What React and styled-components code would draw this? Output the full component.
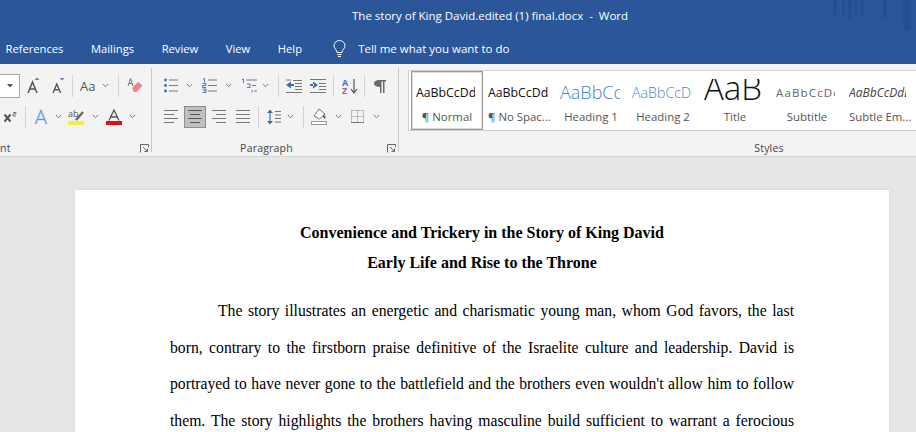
import React from "react";
import styled, { createGlobalStyle } from "styled-components";

const Global = createGlobalStyle`
  html, body { margin: 0; padding: 0; height: 100%; overflow: hidden; background: #e6e6e6; }
`;

const Window = styled.div`
  width: 916px;
  height: 432px;
  overflow: hidden;
  display: flex;
  flex-direction: column;
  font-family: "Open Sans", "Noto Sans", sans-serif;
`;

const TitleBar = styled.div`
  position: relative;
  height: 32px;
  flex: none;
  background: #2b579a;
  color: #fff;
  font-size: 11.5px;
  line-height: 31px;
  padding-left: 352px;
  white-space: pre;
`;

const TitleArt = styled.svg`
  position: absolute;
  right: 0;
  top: 0;
`;

const TabBar = styled.div`
  height: 32px;
  flex: none;
  background: #2b579a;
  color: #fff;
  font-size: 11.2px;
  display: flex;
  align-items: center;
  gap: 27.6px;
  padding-left: 5.5px;
`;

const TellMe = styled.div`
  display: flex;
  align-items: center;
  gap: 12px;
  margin-left: 3.5px;
  font-size: 11.5px;
`;

const Ribbon = styled.div`
  height: 92px;
  flex: none;
  background: #f3f3f3;
  border-bottom: 1px solid #d4d4d4;
  display: flex;
`;

const Group = styled.div`
  width: ${(p) => p.$w}px;
  flex: none;
  box-sizing: border-box;
  border-right: ${(p) => (p.$last ? "none" : "1px solid #c8c8c8")};
  height: 84px;
  margin-top: 4px;
  display: flex;
  flex-direction: column;
`;

const ToolRow = styled.div`
  display: flex;
  align-items: center;
  height: ${(p) => p.$h}px;
  margin-top: 5px;
`;

const Ico = styled.svg`
  flex: none;
  margin-left: ${(p) => p.$ml || 0}px;
  display: block;
`;

const Sep = styled.div`
  flex: none;
  width: 1px;
  height: 22px;
  background: #d2d2d2;
  margin-left: ${(p) => p.$ml}px;
`;

const FontBox = styled.div`
  width: 19px;
  height: 22px;
  flex: none;
  background: #fff;
  border: 1px solid #a9a9a9;
  border-left: none;
  display: flex;
  align-items: center;
  justify-content: center;
`;

const Active = styled.div`
  width: 22px;
  height: 22px;
  flex: none;
  margin-left: ${(p) => p.$ml}px;
  background: #c0c0c0;
  border: 1px solid #8e8e8e;
  box-sizing: border-box;
  display: flex;
  align-items: center;
  justify-content: center;
`;

const Footer = styled.div`
  display: flex;
  align-items: center;
  height: 16px;
  margin-top: auto;
  margin-bottom: -4px;
  font-size: 10.5px;
  color: #444;
  letter-spacing: 0.2px;
  padding-right: 2px;
`;

const FooterLabel = styled.span`
  flex: 1;
  text-align: ${(p) => p.$align || "center"};
  padding-right: ${(p) => p.$inset || 0}px;
  overflow: hidden;
`;

const StyleGallery = styled.div`
  height: 59px;
  margin: 2px 0 0 9px;
  background: #fff;
  border: 1px solid #d0d0d0;
  border-right: none;
  display: flex;
  padding-left: 2px;
  overflow: hidden;
`;

const StyleCard = styled.div`
  width: ${(p) => p.$w}px;
  flex: none;
  box-sizing: border-box;
  height: 59px;
  display: flex;
  flex-direction: column;
  padding: ${(p) => (p.$selected ? "6px 0 0 3px" : "8px 0 0 5px")};
  overflow: hidden;
  border: ${(p) => (p.$selected ? "2px solid #dcdcdc" : "none")};
  outline: ${(p) => (p.$selected ? "1px solid #9a9a9a" : "none")};
  outline-offset: -1px;
`;

const StylePreview = styled.div`
  height: 26px;
  flex: none;
  box-sizing: border-box;
  width: ${(p) => p.$clip || 60}px;
  overflow: hidden;
  white-space: nowrap;
  display: flex;
  align-items: center;
  padding-bottom: ${(p) => p.$lift || 0}px;
  font-size: ${(p) => p.$size}px;
  color: ${(p) => p.$color || "#111"};
  font-style: ${(p) => (p.$italic ? "italic" : "normal")};
  letter-spacing: ${(p) => p.$track || 0}px;
  font-weight: ${(p) => p.$weight || 400};
`;

const StyleName = styled.div`
  font-size: 11.4px;
  color: #555;
  white-space: nowrap;
  margin-top: 4px;
  width: 62px;
  text-align: center;
`;

const Canvas = styled.div`
  flex: 1;
  background: #e6e6e6;
  padding: 33px 27px 0 75px;
  overflow: hidden;
`;

const Page = styled.div`
  background: #fff;
  height: 400px;
  box-sizing: border-box;
  padding: 28px 95px 0;
  font-family: "Liberation Serif", "Times New Roman", serif;
  color: #000;
  box-shadow: 0 0 2px #ccc;
`;

const DocTitle = styled.div`
  text-align: center;
  font-weight: 700;
  font-size: 16px;
  line-height: 30px;
`;

const Body = styled.p`
  margin: 15px 0 0;
  font-size: 15.7px;
  line-height: 36.6px;
  text-align: justify;
  text-align-last: justify;
  text-indent: 48px;
`;

const Chev = ({ ml }) => (
  <Ico $ml={ml} width="7" height="5" viewBox="0 0 7 5">
    <path d="M0.8 1L3.5 3.7L6.2 1" fill="none" stroke="#777" strokeWidth="1" />
  </Ico>
);

const Launcher = () => (
  <Ico width="9" height="9" viewBox="0 0 9 9">
    <path d="M0.5 8.5V0.5H8.5V3M3 3L7.5 7.5M7.5 4.5V7.5H4.5" fill="none" stroke="#666" />
  </Ico>
);

const Rows = ({ ml, w, ys, color = "#777" }) => (
  <Ico $ml={ml} width={w} height="15" viewBox={`0 0 ${w} 15`}>
    {ys.map(([y, x1, x2], i) => (
      <path key={i} d={`M${x1} ${y}.5H${x2}`} stroke={color} />
    ))}
  </Ico>
);

const fontRowOne = (
  <ToolRow $h={25}>
    <FontBox>
      <Ico width="6" height="4" viewBox="0 0 6 4">
        <path d="M0 0H6L3 3.5Z" fill="#555" />
      </Ico>
    </FontBox>
    <Ico $ml={7} width="14" height="17" viewBox="0 0 14 17">
      <path d="M1 16L5.5 5L10 16M2.8 12H8.2" fill="none" stroke="#555" strokeWidth="1.5" />
      <path d="M7.5 3L10 0.5L12.5 3Z" fill="#5b82b5" />
    </Ico>
    <Ico $ml={11} width="13" height="17" viewBox="0 0 13 17">
      <path d="M1 16L4.8 7L8.6 16M2.4 12.8H7.2" fill="none" stroke="#555" strokeWidth="1.4" />
      <path d="M7.5 1H12.5L10 3.5Z" fill="#5b82b5" />
    </Ico>
    <Sep $ml={7} />
    <Ico $ml={7} width="16" height="14" viewBox="0 0 16 14">
      <text x="0" y="12" fontFamily="Open Sans, sans-serif" fontSize="13" fill="#555">Aa</text>
    </Ico>
    <Chev ml={6} />
    <Sep $ml={9} />
    <Ico $ml={8} width="16" height="17" viewBox="0 0 16 17">
      <path d="M1 9L3.5 1.5L6 9M2 6.5H5" fill="none" stroke="#777" />
      <path d="M5 11L11 5L15.5 8.5L9.5 15H7Z" fill="#e9838f" />
    </Ico>
  </ToolRow>
);

const fontRowTwo = (
  <ToolRow $h={27}>
    <Ico $ml={4} width="13" height="12" viewBox="0 0 13 12">
      <path d="M0.5 3.5L6.5 10.5M6.5 3.5L0.5 10.5" stroke="#555" strokeWidth="2" />
      <path d="M9 1.5H12V3H9V5H12" fill="none" stroke="#777" />
    </Ico>
    <Sep $ml={8} />
    <Ico $ml={8} width="14" height="16" viewBox="0 0 14 16">
      <path d="M1.5 15L7 1.5L12.5 15M4 10.5H10" fill="none" stroke="#cfe0f3" strokeWidth="3" />
      <path d="M1.5 15L7 1.5L12.5 15M4 10.5H10" fill="none" stroke="#5f8fc9" strokeWidth="1" />
    </Ico>
    <Chev ml={7} />
    <Ico $ml={6} width="17" height="16" viewBox="0 0 17 16">
      <text x="0" y="8" fontFamily="Open Sans, sans-serif" fontSize="9" fill="#555">ab</text>
      <path d="M8 11L15 3" stroke="#666" strokeWidth="2.4" />
      <rect x="0" y="12" width="16" height="4" fill="#f6ee3a" />
    </Ico>
    <Chev ml={7} />
    <Ico $ml={7} width="16" height="16" viewBox="0 0 16 16">
      <path d="M3 11.5L8 1L13 11.5M5 8H11" fill="none" stroke="#555" strokeWidth="1.3" />
      <rect x="0" y="12" width="16" height="4" fill="#e01010" />
    </Ico>
    <Chev ml={7} />
  </ToolRow>
);

const paraRowOne = (
  <ToolRow $h={25}>
    <Ico $ml={12} width="14" height="15" viewBox="0 0 14 15">
      <circle cx="1.5" cy="2" r="1.4" fill="#3d6fa8" />
      <circle cx="1.5" cy="7.5" r="1.4" fill="#3d6fa8" />
      <circle cx="1.5" cy="13" r="1.4" fill="#3d6fa8" />
      <path d="M5 2H14M5 7.5H14M5 13H14" stroke="#777" />
    </Ico>
    <Chev ml={8} />
    <Ico $ml={9} width="15" height="15" viewBox="0 0 15 15">
      <path d="M1 1L2.5 0.5V4.5M0.5 5.5H4V7.5H0.5V9.5H4M0.5 11H4V14.5H0.5M1.5 12.7H4" fill="none" stroke="#3d6fa8" strokeWidth="0.9" />
      <path d="M6 2H15M6 7.5H15M6 13H15" stroke="#777" />
    </Ico>
    <Chev ml={8} />
    <Ico $ml={9} width="16" height="15" viewBox="0 0 16 15">
      <path d="M1 1.5L2.5 1V5M6 6H9V9.5H6M11 12V14.5" fill="none" stroke="#3d6fa8" strokeWidth="0.9" />
      <path d="M5 2H16M11 7.5H15M13 13H16" stroke="#777" />
    </Ico>
    <Chev ml={5} />
    <Sep $ml={9} />
    <Ico $ml={7} width="16" height="14" viewBox="0 0 16 14">
      <path d="M7 1.5H16M9 4.5H16M9 7.5H16M9 10.5H16M0 13.5H16M0 1H5" stroke="#777" />
      <path d="M0 6L5 2.5V9.5Z M4 5H8V7H4Z" fill="#3d6fa8" />
    </Ico>
    <Ico $ml={8} width="16" height="14" viewBox="0 0 16 14">
      <path d="M0 0.5H16M9 4.5H16M9 7.5H16M9 10.5H16M0 13.5H16" stroke="#777" />
      <path d="M8 6L3 2.5V9.5Z M0 5H4V7H0Z" fill="#3d6fa8" />
    </Ico>
    <Sep $ml={7} />
    <Ico $ml={8} width="16" height="16" viewBox="0 0 16 16">
      <text x="0" y="7.5" fontFamily="Open Sans, sans-serif" fontSize="9" fontWeight="700" fill="#3d78bd">A</text>
      <text x="0" y="15.5" fontFamily="Open Sans, sans-serif" fontSize="9" fontWeight="700" fill="#a45ca8">Z</text>
      <path d="M12 1V14M9 11L12 15L15 11" fill="none" stroke="#555" strokeWidth="1.2" />
    </Ico>
    <Sep $ml={6} />
    <Ico $ml={9} width="12" height="14" viewBox="0 0 12 14">
      <path d="M5 1H12V2.5H10.5V14H9V2.5H7.5V14H6V8C2 8 0 6.5 0 4.5S2 1 5 1Z" fill="#6a6a6a" />
    </Ico>
  </ToolRow>
);

const paraRowTwo = (
  <ToolRow $h={27}>
    <Rows ml={12} w={14} ys={[[1, 0, 14], [5, 0, 10], [9, 0, 14], [13, 0, 10]]} />
    <Active $ml={6}>
      <Rows w={14} ys={[[1, 0, 14], [5, 2, 12], [9, 0, 14], [13, 2, 12]]} color="#555" />
    </Active>
    <Rows ml={6} w={14} ys={[[1, 0, 14], [5, 4, 14], [9, 0, 14], [13, 4, 14]]} />
    <Rows ml={10} w={14} ys={[[1, 0, 14], [5, 0, 14], [9, 0, 14], [13, 0, 14]]} />
    <Sep $ml={8} />
    <Ico $ml={8} width="14" height="16" viewBox="0 0 14 16">
      <path d="M3 3V13" stroke="#3d6fa8" strokeWidth="1.2" />
      <path d="M0 4L3 0.5L6 4ZM0 12L3 15.5L6 12Z" fill="#3d6fa8" />
      <path d="M8 2.5H14M8 6H14M8 9.5H14M8 13H14" stroke="#777" />
    </Ico>
    <Chev ml={6} />
    <Sep $ml={9} />
    <Ico $ml={7} width="17" height="17" viewBox="0 0 17 17">
      <path d="M3 8L8 1L14 6L8.5 11Z" fill="#fff" stroke="#777" />
      <path d="M12 6L15 9L13.5 11L12 9Z" fill="#3d6fa8" />
      <rect x="0.5" y="13.5" width="15" height="3" fill="#fff" stroke="#999" />
    </Ico>
    <Chev ml={7} />
    <Ico $ml={9} width="13" height="13" viewBox="0 0 13 13">
      <path d="M0.5 0.5H13M0.5 6.5H13M0.5 0.5V13M6.5 0.5V13M12.5 0.5V13" stroke="#888" strokeDasharray="1 1" fill="none" />
      <path d="M0 12.5H13" stroke="#777" />
    </Ico>
    <Chev ml={9} />
  </ToolRow>
);

const styleItems = [
  { name: "¶ Normal", w: 72, text: "AaBbCcDdEe", size: 12.3, clip: 59, selected: true },
  { name: "¶ No Spac...", w: 72, text: "AaBbCcDdEe", size: 12.3 },
  { name: "Heading 1", w: 72, text: "AaBbCcDd", size: 18, color: "#4a83bd", weight: 300 },
  { name: "Heading 2", w: 72, text: "AaBbCcDd", size: 14.2, color: "#4d86bd", weight: 300 },
  { name: "Title", w: 72, text: "AaB", size: 33, weight: 300, lift: 10 },
  { name: "Subtitle", w: 73, text: "AaBbCcDd", size: 11.6, color: "#666", track: 1.1, clip: 59 },
  { name: "Subtle Em...", w: 72, text: "AaBbCcDdEe", size: 12, color: "#444", italic: true, clip: 57 },
];

const App = () => {
  return (
    <Window>
      <Global />
      <TitleBar>
        {"The story of King David.edited (1) final.docx  -  Word"}
        <TitleArt width="83" height="33" viewBox="0 0 83 33">
          <path d="M0 0H4V15H0ZM9 0H12V15H9ZM15 0H19V18H15ZM21 0H24V15H21ZM27 0H31V15H27ZM50 0H54V18H50ZM70 0H78V31H74Q70 31 70 26Z" fill="#25508f" />
        </TitleArt>
      </TitleBar>
      <TabBar>
        <span>References</span>
        <span>Mailings</span>
        <span>Review</span>
        <span>View</span>
        <span>Help</span>
        <TellMe>
          <Ico width="13" height="17" viewBox="0 0 13 17">
            <path d="M4 12.5C4 9.5 1 9 1 5.7A5.5 5.2 0 0 1 12 5.7C12 9 9 9.5 9 12.5ZM4.5 14.5H8.5M5 16.5H8" fill="none" stroke="#fff" />
          </Ico>
          <span>Tell me what you want to do</span>
        </TellMe>
      </TabBar>
      <Ribbon>
        <Group $w={152}>
          {fontRowOne}
          {fontRowTwo}
          <Footer>
            <FooterLabel $align="left">nt</FooterLabel>
            <Launcher />
          </Footer>
        </Group>
        <Group $w={247}>
          {paraRowOne}
          {paraRowTwo}
          <Footer>
            <FooterLabel $inset={6}>Paragraph</FooterLabel>
            <Launcher />
          </Footer>
        </Group>
        <Group $w={742} $last>
          <StyleGallery>
            {styleItems.map((s) => (
              <StyleCard key={s.name} $w={s.w} $selected={s.selected}>
                <StylePreview
                  $size={s.size}
                  $clip={s.clip}
                  $color={s.color}
                  $italic={s.italic}
                  $track={s.track}
                  $weight={s.weight}
                  $lift={s.lift}
                >
                  {s.text}
                </StylePreview>
                <StyleName>{s.name}</StyleName>
              </StyleCard>
            ))}
          </StyleGallery>
          <Footer>
            <FooterLabel>Styles</FooterLabel>
          </Footer>
        </Group>
      </Ribbon>
      <Canvas>
        <Page>
          <DocTitle>Convenience and Trickery in the Story of King David</DocTitle>
          <DocTitle>Early Life and Rise to the Throne</DocTitle>
          <Body>
            The story illustrates an energetic and charismatic young man, whom God favors, the last
            <br />
            born, contrary to the firstborn praise definitive of the Israelite culture and leadership. David is
            <br />
            portrayed to have never gone to the battlefield and the brothers even wouldn't allow him to follow
            <br />
            them. The story highlights the brothers having masculine build sufficient to warrant a ferocious
          </Body>
        </Page>
      </Canvas>
    </Window>
  );
};

export default App;
